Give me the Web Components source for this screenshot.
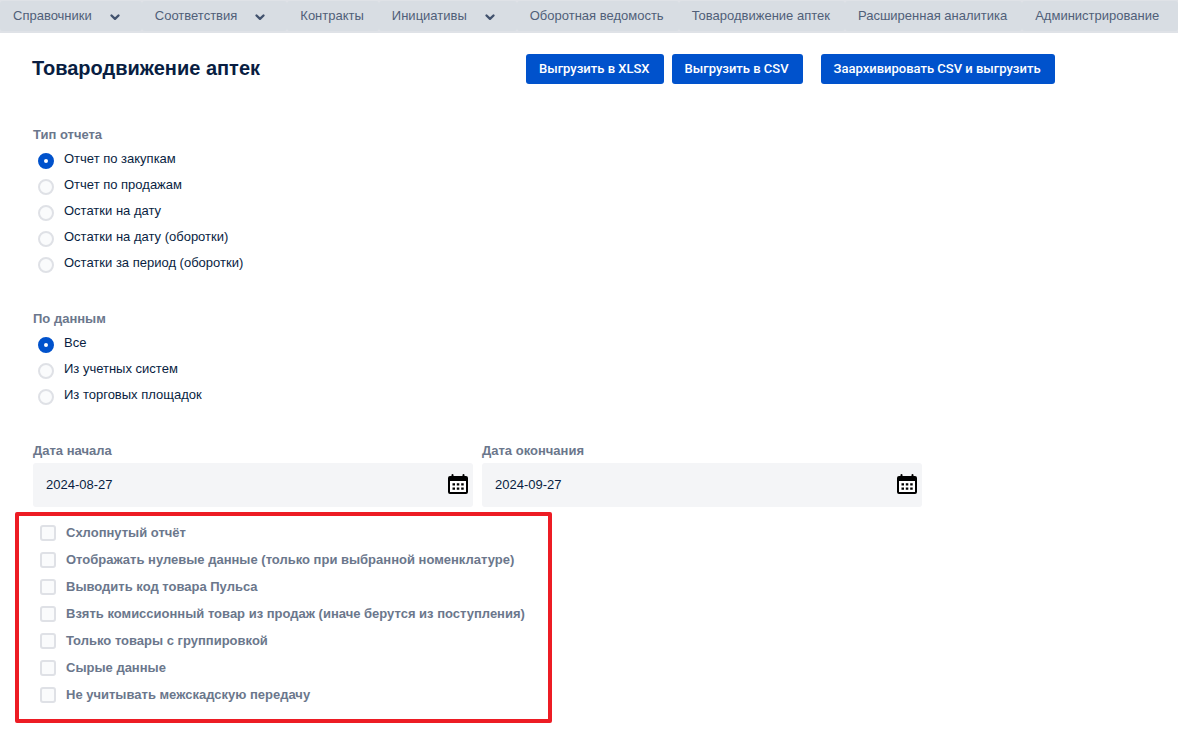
<!DOCTYPE html>
<html lang="ru">
<head>
<meta charset="utf-8">
<meta name="viewport" content="width=device-width, initial-scale=1">
<title>Товародвижение аптек</title>
<style>
  body {
    margin: 0;
    background: #fff;
    color: #091e42;
    font: 13px/20px "Liberation Sans", Arial, sans-serif;
    --accent: #0052cc;
    --muted: #6b778c;
    --field: #f4f5f7;
    --field-border: #dfe1e6;
    --control: #fafbfc;
  }
</style>
</head>
<body>
<report-page></report-page>

<template id="report-page">
  <style>
    :host { display: block; }
    main { padding: 21px 32px 8px; }
    header { display: grid; grid-template-columns: 494px 1fr; align-items: start; margin-bottom: 41px; }
    h1 { margin: 0; font-size: 20px; line-height: 28px; font-weight: 700; }
    .actions { display: flex; gap: 8px; }
    .actions .archive { margin-left: 10px; }
    form { display: block; padding-left: 1px; }
    choice-group { margin-bottom: 30px; }
    .dates { display: grid; grid-template-columns: repeat(2, minmax(0, 440px)); gap: 9px; }
    .flags { box-sizing: border-box; width: fit-content; margin: 5px 0 0 -18px; padding: 3px 23px 11px 21px; border: 4px solid #ed1c24; border-radius: 2px; }
  </style>
  <main-nav>
    <nav-item menu>Справочники</nav-item>
    <nav-item menu>Соответствия</nav-item>
    <nav-item>Контракты</nav-item>
    <nav-item menu>Инициативы</nav-item>
    <nav-item>Оборотная ведомость</nav-item>
    <nav-item>Товародвижение аптек</nav-item>
    <nav-item>Расширенная аналитика</nav-item>
    <nav-item last>Администрирование</nav-item>
  </main-nav>
  <main>
    <header>
      <h1>Товародвижение аптек</h1>
      <div class="actions">
        <action-button>Выгрузить в XLSX</action-button>
        <action-button>Выгрузить в CSV</action-button>
        <action-button class="archive">Заархивировать CSV и выгрузить</action-button>
      </div>
    </header>
    <form>
      <choice-group legend="Тип отчета" name="type" options="Отчет по закупкам|Отчет по продажам|Остатки на дату|Остатки на дату (оборотки)|Остатки за период (оборотки)"></choice-group>
      <choice-group legend="По данным" name="source" options="Все|Из учетных систем|Из торговых площадок"></choice-group>
      <div class="dates">
        <date-field label="Дата начала" value="2024-08-27"></date-field>
        <date-field label="Дата окончания" value="2024-09-27"></date-field>
      </div>
      <div class="flags">
        <check-option>Схлопнутый отчёт</check-option>
        <check-option>Отображать нулевые данные (только при выбранной номенклатуре)</check-option>
        <check-option>Выводить код товара Пульса</check-option>
        <check-option>Взять комиссионный товар из продаж (иначе берутся из поступления)</check-option>
        <check-option>Только товары с группировкой</check-option>
        <check-option>Сырые данные</check-option>
        <check-option>Не учитывать межскадскую передачу</check-option>
      </div>
    </form>
  </main>
</template>

<template id="main-nav">
  <style>
    :host { display: block; background: #dfe2e7; }
    nav { display: flex; padding: 1px 0 2px; }
  </style>
  <nav><slot></slot></nav>
</template>

<template id="nav-item">
  <style>
    :host { display: block; flex: none; }
    :host([last]) { flex: 1 0 auto; }
    a, button { display: flex; box-sizing: border-box; width: 100%; height: 30px; align-items: center; padding: 0 15px 0 13px; border: 0; border-radius: 3px; background: #d8dde3; color: #505f79; font: inherit; text-decoration: none; white-space: nowrap; cursor: pointer; }
    button { gap: 17px; padding-right: 21px; }
    svg { display: block; }
  </style>
</template>

<template id="action-button">
  <style>
    :host { display: block; }
    button { display: block; height: 30px; padding: 0 14px 0 13px; border: 0; border-radius: 3px; background: var(--accent); color: #fff; font: 500 13px/20px Roboto, "Liberation Sans", sans-serif; white-space: nowrap; cursor: pointer; }
  </style>
  <button type="button"><slot></slot></button>
</template>

<template id="choice-group">
  <style>
    :host { display: block; }
    fieldset { margin: 0; padding: 0; border: 0; }
    legend { padding: 0; margin-bottom: 4px; color: var(--muted); font-weight: 700; }
    label { display: flex; height: 26px; align-items: flex-start; gap: 10px; padding-left: 5px; }
    input { appearance: none; flex: none; box-sizing: border-box; width: 16px; height: 16px; margin: 4px 0 0; border: 2px solid var(--field-border); border-radius: 50%; background: var(--control); }
    input:checked { border: 6px solid var(--accent); background: #fff; }
  </style>
  <fieldset><legend></legend></fieldset>
</template>

<template id="date-field">
  <style>
    :host { display: block; }
    label { display: block; margin-bottom: 2px; color: var(--muted); font-weight: 700; }
    .box { display: flex; height: 44px; align-items: center; padding: 0 4px 0 13px; border-radius: 3px; background: var(--field); }
    input { flex: 1; min-width: 0; padding: 0; border: 0; outline: 0; background: none; color: inherit; font: inherit; }
    svg { display: block; flex: none; }
  </style>
  <label for="date"></label>
  <div class="box">
    <input id="date" type="text">
    <svg width="22" height="22" viewBox="0 0 22 22" aria-hidden="true">
      <path d="M3 2h1.500V1a1 1 0 0 1 2 0v1h9V1a1 1 0 0 1 2 0v1H19a2 2 0 0 1 2 2v14a2 2 0 0 1-2 2H3a2 2 0 0 1-2-2V4a2 2 0 0 1 2-2z"/>
      <path fill="#fff" d="M3 7h16v11H3z"/>
      <path d="M5.500 9.300H8v2.200H5.500zM9.800 9.300h2.500v2.200H9.800zM14.200 9.300h2.500v2.200h-2.500zM5.500 13.500H8v2.200H5.500zM9.800 13.500h2.500v2.200H9.800zM14.200 13.500h2.500v2.200h-2.500z"/>
    </svg>
  </div>
</template>

<template id="check-option">
  <style>
    :host { display: block; }
    label { display: flex; height: 27px; align-items: center; gap: 10px; color: var(--muted); font-weight: 700; }
    input { appearance: none; flex: none; box-sizing: border-box; width: 16px; height: 16px; margin: 0; border: 2px solid var(--field-border); border-radius: 3px; background: var(--control); }
    input:checked { border-color: var(--accent); background: var(--accent); }
  </style>
  <label><input type="checkbox"><span><slot></slot></span></label>
</template>

<script>
  class BaseElement extends HTMLElement {
    constructor() {
      super();
      const root = this.attachShadow({ mode: "open" });
      root.append(document.getElementById(this.localName).content.cloneNode(true));
    }
  }

  class NavItem extends BaseElement {
    connectedCallback() {
      const menu = this.hasAttribute("menu");
      const control = document.createElement(menu ? "button" : "a");
      if (menu) control.type = "button"; else control.href = "#";
      control.append(document.createElement("slot"));
      if (menu) {
        control.insertAdjacentHTML("beforeend",
          '<svg width="12" height="10" viewBox="0 0 12 10" aria-hidden="true"><path d="M2.500 4.500L6 7.800L9.500 4.500" fill="none" stroke="#42526e" stroke-width="2.400" stroke-linecap="round" stroke-linejoin="round"/></svg>');
      }
      this.shadowRoot.append(control);
    }
  }

  class ChoiceGroup extends BaseElement {
    connectedCallback() {
      this.shadowRoot.querySelector("legend").textContent = this.getAttribute("legend");
      const fieldset = this.shadowRoot.querySelector("fieldset");
      this.getAttribute("options").split("|").forEach((text, index) => {
        const label = document.createElement("label");
        const input = document.createElement("input");
        const caption = document.createElement("span");
        input.type = "radio";
        input.name = this.getAttribute("name");
        input.value = String(index);
        input.checked = index === 0;
        caption.textContent = text;
        label.append(input, caption);
        fieldset.append(label);
      });
    }
  }

  class DateField extends BaseElement {
    connectedCallback() {
      this.shadowRoot.querySelector("label").textContent = this.getAttribute("label");
      this.shadowRoot.querySelector("input").value = this.getAttribute("value");
    }
  }

  customElements.define("main-nav", class extends BaseElement {});
  customElements.define("nav-item", NavItem);
  customElements.define("action-button", class extends BaseElement {});
  customElements.define("choice-group", ChoiceGroup);
  customElements.define("date-field", DateField);
  customElements.define("check-option", class extends BaseElement {});
  customElements.define("report-page", class extends BaseElement {});
</script>
</body>
</html>
